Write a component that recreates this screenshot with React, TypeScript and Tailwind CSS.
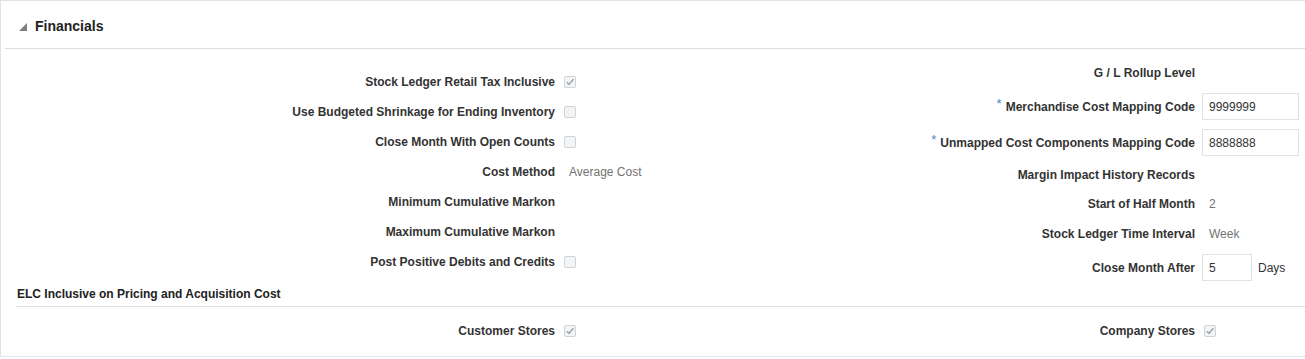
import React from "react";

function Check({ checked }: { checked?: boolean }) {
  return (
    <div className="w-[12px] h-[12px] border border-[#cfd4d8] bg-[#f3f4f5] rounded-[2px] flex items-center justify-center">
      {checked && (
        <svg width="10" height="10" viewBox="0 0 10 10">
          <path d="M1.8 5.2 L4 7.4 L8.4 2.2" fill="none" stroke="#a3a7ab" strokeWidth="1.6" />
        </svg>
      )}
    </div>
  );
}

function Row({
  label,
  h,
  lw,
  gap,
  req,
  children,
}: {
  label: string;
  h: string;
  lw: string;
  gap: string;
  req?: boolean;
  children?: React.ReactNode;
}) {
  return (
    <div className={`flex items-center ${h}`}>
      <div className={`${lw} shrink-0 text-right font-bold text-[#333333] leading-[14px] flex justify-end items-start`}>
        {req && <span className="text-[#4a87c6] font-normal text-[13px] leading-[10px] mr-[4px] -mt-[1px]">*</span>}
        <span>{label}</span>
      </div>
      <div className={`${gap} flex items-center whitespace-nowrap shrink-0`}>{children}</div>
    </div>
  );
}

function Value({ children }: { children: React.ReactNode }) {
  return <span className="text-[#737373] leading-[14px] whitespace-nowrap">{children}</span>;
}

function Input({ value, w }: { value: string; w: string }) {
  return (
    <div className={`${w} h-[27px] border border-[#dfe3e7] bg-white flex items-center pl-[6px] text-[#333333]`}>
      {value}
    </div>
  );
}

export default function App() {
  return (
    <div className="w-[1305px] h-[359px] bg-white font-['Liberation_Sans',Arial,sans-serif] text-[12px]">
      <div className="h-[357px] border-l border-t border-b border-[#dce3e9] flex flex-col">
        <div className="ml-[4px] h-[48px] border-b border-[#d6dfe6] flex items-center pl-[14px] pt-[3px] shrink-0">
          <svg width="8" height="8" viewBox="0 0 8 8" className="mt-[2px]">
            <polygon points="8,0 8,8 0,8" fill="#7b7e82" />
          </svg>
          <span className="ml-[8px] text-[14px] font-bold text-[#222222]">Financials</span>
        </div>

        <div className="flex h-[238px] shrink-0">
          <div className="w-[639px] shrink-0 pt-[18px] flex flex-col">
            <Row label="Stock Ledger Retail Tax Inclusive" h="h-[30px]" lw="w-[554px]" gap="ml-[9px]">
              <Check checked />
            </Row>
            <Row label="Use Budgeted Shrinkage for Ending Inventory" h="h-[30px]" lw="w-[554px]" gap="ml-[9px]">
              <Check />
            </Row>
            <Row label="Close Month With Open Counts" h="h-[30px]" lw="w-[554px]" gap="ml-[9px]">
              <Check />
            </Row>
            <Row label="Cost Method" h="h-[30px]" lw="w-[554px]" gap="ml-[14px]">
              <Value>Average Cost</Value>
            </Row>
            <Row label="Minimum Cumulative Markon" h="h-[30px]" lw="w-[554px]" gap="ml-[9px]" />
            <Row label="Maximum Cumulative Markon" h="h-[30px]" lw="w-[554px]" gap="ml-[9px]" />
            <Row label="Post Positive Debits and Credits" h="h-[30px]" lw="w-[554px]" gap="ml-[9px]">
              <Check />
            </Row>
          </div>
          <div className="flex-1 pt-[9px] flex flex-col">
            <Row label="G / L Rollup Level" h="h-[30px]" lw="w-[555px]" gap="ml-[7px]" />
            <Row label="Merchandise Cost Mapping Code" req h="h-[37px]" lw="w-[555px]" gap="ml-[7px]">
              <Input value="9999999" w="w-[97px]" />
            </Row>
            <Row label="Unmapped Cost Components Mapping Code" req h="h-[35px]" lw="w-[555px]" gap="ml-[7px]">
              <Input value="8888888" w="w-[97px]" />
            </Row>
            <Row label="Margin Impact History Records" h="h-[29px]" lw="w-[555px]" gap="ml-[7px]" />
            <Row label="Start of Half Month" h="h-[30px]" lw="w-[555px]" gap="ml-[14px]">
              <Value>2</Value>
            </Row>
            <Row label="Stock Ledger Time Interval" h="h-[30px]" lw="w-[555px]" gap="ml-[14px]">
              <Value>Week</Value>
            </Row>
            <Row label="Close Month After" h="h-[37px]" lw="w-[555px]" gap="ml-[7px]">
              <Input value="5" w="w-[50px]" />
              <span className="ml-[6px] text-[#333333]">Days</span>
            </Row>
          </div>
        </div>

        <div className="ml-[15px] h-[20px] border-b border-[#dcdfe2] shrink-0">
          <div className="pl-[1px] leading-[14px] font-bold text-[#222222]">
            ELC Inclusive on Pricing and Acquisition Cost
          </div>
        </div>

        <div className="flex-1 flex pt-[9px]">
          <div className="w-[639px] shrink-0">
            <Row label="Customer Stores" h="h-[30px]" lw="w-[554px]" gap="ml-[9px]">
              <Check checked />
            </Row>
          </div>
          <div className="flex-1">
            <Row label="Company Stores" h="h-[30px]" lw="w-[555px]" gap="ml-[9px]">
              <Check checked />
            </Row>
          </div>
        </div>
      </div>
    </div>
  );
}
